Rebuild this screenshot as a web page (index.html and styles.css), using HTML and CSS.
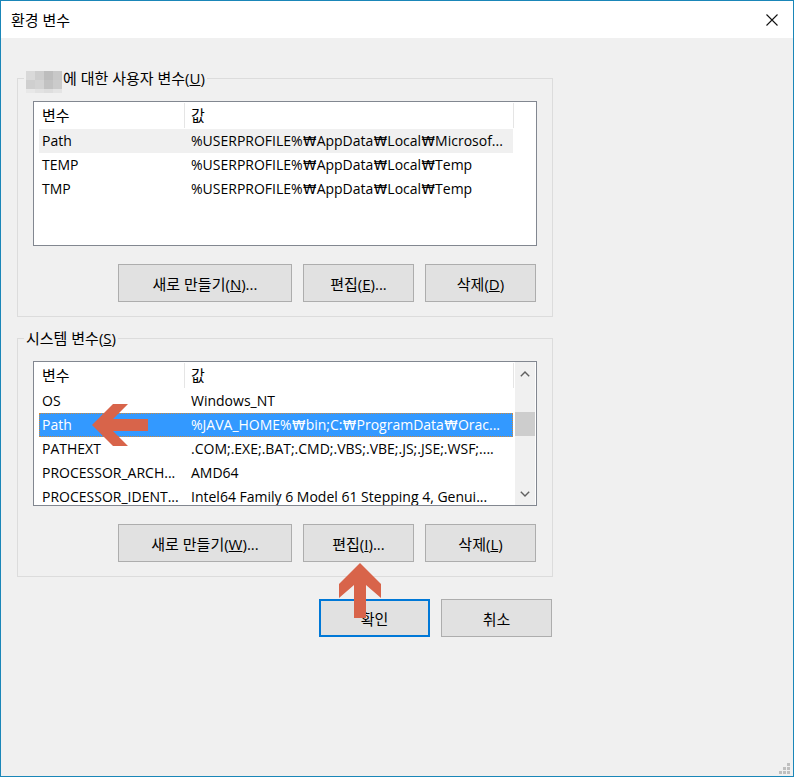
FILE: index.html
```html
<!DOCTYPE html>
<html lang="ko">
<head>
<meta charset="utf-8">
<title>환경 변수</title>
<link rel="stylesheet" href="styles.css">
</head>
<body>
<div class="window">
  <header class="titlebar">
    <span class="title">환경 변수</span>
    <svg class="close" width="12" height="12" viewBox="0 0 12 12"><path d="M0.5 0.5 L11.5 11.5 M11.5 0.5 L0.5 11.5" stroke="#111" stroke-width="1.1" fill="none"/></svg>
  </header>
  <main class="content">
    <fieldset class="group">
      <legend><span class="blur"><i class="b1"></i><i class="b2"></i><i class="b3"></i><i class="b4"></i><i class="b5"></i><i class="b6"></i><i class="b7"></i><i class="b8"></i><i class="b9"></i><i class="b10"></i><i class="b11"></i><i class="b12"></i></span>에 대한 사용자 변수(<u>U</u>)</legend>
      <div class="group-body">
        <div class="list">
          <div class="list-main">
            <div class="list-head"><span class="h1">변수</span><span class="h2">값</span></div>
            <div class="row hover"><span class="c1">Path</span><span class="c2">%USERPROFILE%<span class="won">₩</span>AppData<span class="won">₩</span>Local<span class="won">₩</span>Microsof...</span></div>
            <div class="row"><span class="c1">TEMP</span><span class="c2">%USERPROFILE%<span class="won">₩</span>AppData<span class="won">₩</span>Local<span class="won">₩</span>Temp</span></div>
            <div class="row"><span class="c1">TMP</span><span class="c2">%USERPROFILE%<span class="won">₩</span>AppData<span class="won">₩</span>Local<span class="won">₩</span>Temp</span></div>
          </div>
        </div>
        <div class="btns">
          <button class="btn wide">새로 만들기(<u>N</u>)...</button>
          <button class="btn">편집(<u>E</u>)...</button>
          <button class="btn">삭제(<u>D</u>)</button>
        </div>
      </div>
    </fieldset>

    <fieldset class="group second">
      <legend>시스템 변수(<u>S</u>)</legend>
      <div class="group-body">
        <div class="list">
          <div class="list-main">
            <div class="list-head"><span class="h1">변수</span><span class="h2">값</span></div>
            <div class="row"><span class="c1">OS</span><span class="c2">Windows_NT</span></div>
            <div class="row selected"><span class="c1">Path</span><span class="c2">%JAVA_HOME%<span class="won">₩</span>bin;C:<span class="won">₩</span>ProgramData<span class="won">₩</span>Orac...</span></div>
            <div class="row"><span class="c1">PATHEXT</span><span class="c2">.COM;.EXE;.BAT;.CMD;.VBS;.VBE;.JS;.JSE;.WSF;....</span></div>
            <div class="row"><span class="c1">PROCESSOR_ARCH...</span><span class="c2">AMD64</span></div>
            <div class="row"><span class="c1">PROCESSOR_IDENT...</span><span class="c2">Intel64 Family 6 Model 61 Stepping 4, Genui...</span></div>
          </div>
          <div class="scrollbar">
            <div class="sb-btn"><svg width="10" height="6" viewBox="0 0 10 6"><polyline points="0.8,5.2 5,1 9.2,5.2" fill="none" stroke="#606060" stroke-width="1.4"/></svg></div>
            <div class="sb-track"><div class="sb-thumb"></div></div>
            <div class="sb-btn"><svg width="10" height="6" viewBox="0 0 10 6"><polyline points="0.8,0.8 5,5 9.2,0.8" fill="none" stroke="#606060" stroke-width="1.4"/></svg></div>
          </div>
        </div>
        <div class="btns">
          <button class="btn wide">새로 만들기(<u>W</u>)...</button>
          <button class="btn">편집(<u>I</u>)...</button>
          <button class="btn">삭제(<u>L</u>)</button>
        </div>
      </div>
    </fieldset>

    <div class="dialog-btns">
      <button class="btn default">확인</button>
      <button class="btn">취소</button>
    </div>
  </main>

  <svg class="annot" width="794" height="777" viewBox="0 0 794 777">
    <polygon points="92,425 113,404 128,404 113,419 148,419 148,431 113,431 128,446 113,446" fill="#d8644a"/>
    <polygon points="360,563 381,584 381,598 366,585 366,618 354,618 354,585 339,598 339,584" fill="#d8644a"/>
  </svg>
  <svg class="grip" width="12" height="12" viewBox="0 0 12 12">
    <rect x="9" y="1" width="3" height="3" fill="#bfbfbf"/>
    <rect x="5" y="5" width="3" height="3" fill="#bfbfbf"/>
    <rect x="9" y="5" width="3" height="3" fill="#bfbfbf"/>
    <rect x="1" y="9" width="3" height="3" fill="#bfbfbf"/>
    <rect x="5" y="9" width="3" height="3" fill="#bfbfbf"/>
    <rect x="9" y="9" width="3" height="3" fill="#bfbfbf"/>
  </svg>
</div>
</body>
</html>
```

FILE: styles.css
```css
* { box-sizing: border-box; }

html, body {
  margin: 0;
  padding: 0;
  background: #f0f0f0;
}

body {
  font-family: "Open Sans", "Noto Sans CJK KR", sans-serif;
  font-size: 15px;
  color: #000;
}

.won {
  display: inline-block;
  width: 14px;
  text-align: center;
  font-family: "DejaVu Sans", "Noto Sans CJK KR", sans-serif;
  font-size: 13.5px;
}

.window {
  position: relative;
  width: 794px;
  height: 777px;
  border: 1px solid #1a86b8;
  background: #f0f0f0;
  overflow: hidden;
}

.titlebar {
  height: 37px;
  background: #fff;
  display: flex;
  align-items: center;
  justify-content: space-between;
  padding: 0 15px 0 10px;
}

.title {
  font-size: 15px;
  line-height: 20px;
  padding-top: 1px;
}

.close {
  display: block;
  margin-top: 1px;
}

.content {
  padding: 0 0 0 16px;
}

.group {
  width: 536px;
  margin: 30px 0 0 0;
  padding: 13px 15px 14px 6px;
  border: 1px solid #dcdcdc;
  min-width: 0;
}

.group.second {
  margin-top: 11px;
}

.group legend {
  padding: 0 2px;
  height: 20px;
  line-height: 20px;
  font-size: 15px;
  white-space: nowrap;
}

.blur {
  display: inline-grid;
  grid-template-columns: repeat(4, 9px);
  grid-template-rows: 9px 9px 4px;
  vertical-align: middle;
  margin: -4px 1px -4px 0;
  position: relative;
  top: 2px;
}
.blur i { display: block; }
.b1 { background: #d9d9d9; }
.b2 { background: #cdcdcd; }
.b3 { background: #bdbdbd; }
.b4 { background: #c8c8c8; }
.b5 { background: #cfcfcf; }
.b6 { background: #d3d3d3; }
.b7 { background: #c2c2c2; }
.b8 { background: #cbcbcb; }
.b9 { background: #e8e8e8; }
.b10 { background: #e2e2e2; }
.b11 { background: #dedede; }
.b12 { background: #e4e4e4; }

.group-body {
  padding-left: 9px;
}

.list {
  width: 504px;
  height: 145px;
  border: 1px solid #828790;
  background: #fff;
  display: flex;
  overflow: hidden;
  font-size: 14px;
}

.list-main {
  flex: 1;
  min-width: 0;
  overflow: hidden;
}

.list-head {
  display: flex;
  height: 27px;
  line-height: 27px;
  font-size: 15px;
}

.h1 {
  width: 150px;
  padding-left: 8px;
}

.h2 {
  width: 330px;
  padding-left: 6px;
  border-left: 1px solid #e5e5e5;
  border-right: 1px solid #e5e5e5;
  margin-top: 1px;
  margin-bottom: 1px;
  line-height: 25px;
}

.row {
  display: flex;
  width: 474px;
  margin-left: 5px;
  height: 24px;
  line-height: 24px;
  white-space: nowrap;
}

.row.hover {
  background: #f0f0f0;
}

.row.selected {
  background: #3399ff;
  color: #fff;
  outline: 1px dotted #d08a3a;
  outline-offset: -1px;
}

.c1 {
  width: 145px;
  padding-left: 3px;
  overflow: hidden;
}

.c2 {
  flex: 1;
  padding-left: 7px;
  overflow: hidden;
}

.scrollbar {
  width: 20px;
  margin-right: 1px;
  background: #f0f0f0;
  display: flex;
  flex-direction: column;
}

.sb-btn {
  height: 23px;
  display: flex;
  align-items: center;
  justify-content: center;
}

.sb-track {
  flex: 1;
}

.sb-thumb {
  margin-top: 27px;
  height: 24px;
  background: #cdcdcd;
}

.btns {
  display: flex;
  justify-content: flex-end;
  gap: 11px;
  margin-top: 18px;
  padding-right: 1px;
}

.btn {
  width: 111px;
  height: 38px;
  background: #e1e1e1;
  border: 1px solid #adadad;
  font-family: "Open Sans", "Noto Sans CJK KR", sans-serif;
  font-size: 15px;
  color: #000;
  padding: 0;
  margin: 0;
}

.btn.wide {
  width: 174px;
}

.btn.default {
  border: 2px solid #0078d7;
}

.dialog-btns {
  width: 536px;
  display: flex;
  justify-content: flex-end;
  gap: 11px;
  margin-top: 22px;
  padding-right: 1px;
}

.annot {
  position: absolute;
  top: -1px;
  left: -1px;
  pointer-events: none;
}

.grip {
  position: absolute;
  right: 3px;
  bottom: 2px;
}
```
